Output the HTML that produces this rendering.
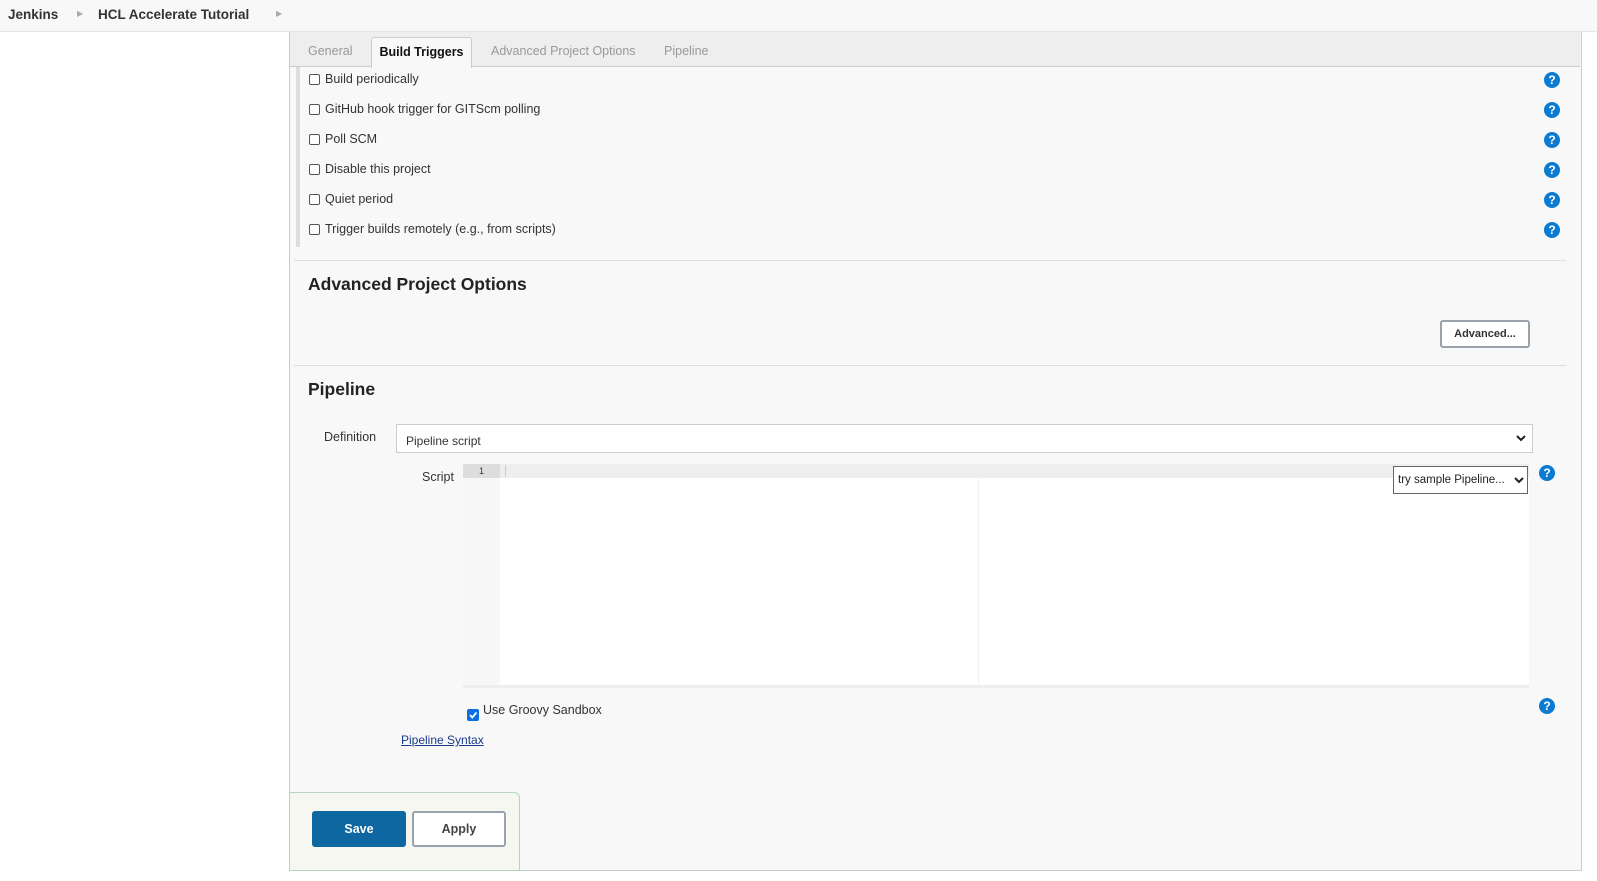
<!DOCTYPE html>
<html><head><meta charset="utf-8"><style>
*{box-sizing:border-box}
body{margin:0;width:1597px;height:881px;background:#fff;font-family:"Liberation Sans",sans-serif;font-size:12.5px;color:#333;position:relative;overflow:hidden}
.a{position:absolute}
.hdr{left:0;top:0;width:1597px;height:32px;background:#f8f8f8;border-bottom:1px solid #e6e6e6}
.crumb{top:7px;font-weight:bold;font-size:13.5px;color:#333}
.sep{top:9px;font-size:8px;color:#aaa}
.panel{left:289px;top:32px;width:1293px;height:839px;background:#f8f8f8;border-left:1px solid #ccc;border-right:1px solid #ccc;border-bottom:1px solid #ccc}
.tabs{left:290px;top:32px;width:1290px;height:35px;background:#eee;border-bottom:1px solid #ccc}
.tab{top:51px;transform:translateY(-50%);color:#999;font-size:12.5px}
.bt{left:371px;top:37px;width:101px;height:31px;background:#f8f8f8;border:1px solid #ccc;border-bottom:none;border-radius:3px 3px 0 0;font-weight:bold;color:#111;text-align:center;line-height:28px;font-size:12.5px}
.cb{width:11px;height:11px;border:1px solid #555;border-radius:2px;background:#fff}
.lbl{font-size:12.5px;color:#333}
.help{width:16px;height:16px;border-radius:50%;background:#0b7ad1;color:#fff;font-weight:bold;font-size:12px;text-align:center;line-height:16px}
.hr{height:1px;background:#ddd}
h2{margin:0;position:absolute;font-size:17.5px;font-weight:bold;color:#222}
.btn{border:2px solid #9aa3ab;background:#fff;border-radius:3px;font-weight:bold;text-align:center}
</style></head><body>
<div class="a hdr"></div>
<div class="a crumb" style="left:8px">Jenkins</div>
<div class="a sep" style="left:77px">▶</div>
<div class="a crumb" style="left:98px">HCL Accelerate Tutorial</div>
<div class="a sep" style="left:276px">▶</div>

<div class="a panel"></div>
<div class="a tabs"></div>
<div class="a tab" style="left:308px">General</div>
<div class="a bt">Build Triggers</div>
<div class="a tab" style="left:491px">Advanced Project Options</div>
<div class="a tab" style="left:664px">Pipeline</div>

<div class="a" style="left:296px;top:67px;width:4px;height:180px;background:#ddd"></div>

<div class="a cb" style="left:309px;top:74px"></div><div class="a lbl" style="left:325px;top:72px">Build periodically</div>
<div class="a cb" style="left:309px;top:104px"></div><div class="a lbl" style="left:325px;top:102px">GitHub hook trigger for GITScm polling</div>
<div class="a cb" style="left:309px;top:134px"></div><div class="a lbl" style="left:325px;top:132px">Poll SCM</div>
<div class="a cb" style="left:309px;top:164px"></div><div class="a lbl" style="left:325px;top:162px">Disable this project</div>
<div class="a cb" style="left:309px;top:194px"></div><div class="a lbl" style="left:325px;top:192px">Quiet period</div>
<div class="a cb" style="left:309px;top:224px"></div><div class="a lbl" style="left:325px;top:222px">Trigger builds remotely (e.g., from scripts)</div>

<div class="a help" style="left:1544px;top:72px">?</div>
<div class="a help" style="left:1544px;top:102px">?</div>
<div class="a help" style="left:1544px;top:132px">?</div>
<div class="a help" style="left:1544px;top:162px">?</div>
<div class="a help" style="left:1544px;top:192px">?</div>
<div class="a help" style="left:1544px;top:222px">?</div>

<div class="a hr" style="left:294px;top:260px;width:1272px"></div>
<h2 style="left:308px;top:274px">Advanced Project Options</h2>
<div class="a btn" style="left:1440px;top:320px;width:90px;height:28px;line-height:24px;font-size:11px;color:#333">Advanced...</div>
<div class="a hr" style="left:294px;top:365px;width:1272px"></div>
<h2 style="left:308px;top:379px">Pipeline</h2>

<div class="a lbl" style="left:324px;top:430px">Definition</div>
<div class="a" style="left:396px;top:424px;width:1137px;height:29px;background:#fff;border:1px solid #ccc;padding:9px 0 0 9px;font-size:12px">Pipeline script</div>
<svg class="a" style="left:1515px;top:433px" width="12" height="10"><path d="M2 3 L6 7 L10 3" stroke="#222" stroke-width="2" fill="none"/></svg>

<div class="a lbl" style="left:422px;top:470px">Script</div>
<div class="a" style="left:463px;top:464px;width:1066px;height:224px;background:#fff;border-bottom:3px solid #eee"></div>
<div class="a" style="left:463px;top:464px;width:37px;height:221px;background:#f7f7f7"></div>
<div class="a" style="left:463px;top:464px;width:1066px;height:14px;background:#eee"></div>
<div class="a" style="left:463px;top:464px;width:37px;height:14px;background:#ddd;font-size:9px;text-align:center;line-height:14px;color:#333">1</div>
<div class="a" style="left:505px;top:465px;width:1px;height:12px;background:#ccc"></div>
<div class="a" style="left:978px;top:478px;width:1px;height:207px;background:#f0f0f0"></div>
<div class="a" style="left:1393px;top:466px;width:135px;height:28px;background:#fff;border:1px solid #666;padding:7px 0 0 4px;font-size:11.5px;color:#222">try sample Pipeline...</div>
<svg class="a" style="left:1513px;top:475px" width="12" height="10"><path d="M2 3 L6 7 L10 3" stroke="#222" stroke-width="2" fill="none"/></svg>
<div class="a help" style="left:1539px;top:465px">?</div>

<div class="a" style="left:467px;top:709px;width:12px;height:12px;background:#0b6fe0;border-radius:2px"></div>
<svg class="a" style="left:467px;top:709px" width="12" height="12"><path d="M3 6 L5.3 8.5 L9.5 3.5" stroke="#fff" stroke-width="1.8" fill="none"/></svg>
<div class="a lbl" style="left:483px;top:703px">Use Groovy Sandbox</div>
<div class="a help" style="left:1539px;top:698px">?</div>
<div class="a" style="left:401px;top:733px;color:#1a3a8a;text-decoration:underline;font-size:12px">Pipeline Syntax</div>

<div class="a" style="left:289px;top:792px;width:231px;height:79px;background:#f5f7f0;border:1px solid #b5d4c0;border-radius:0 6px 0 0"></div>
<div class="a" style="left:312px;top:811px;width:94px;height:36px;background:#0e67a0;border-radius:3px;color:#fff;font-weight:bold;text-align:center;line-height:36px">Save</div>
<div class="a btn" style="left:412px;top:811px;width:94px;height:36px;line-height:32px;color:#444">Apply</div>
</body></html>
